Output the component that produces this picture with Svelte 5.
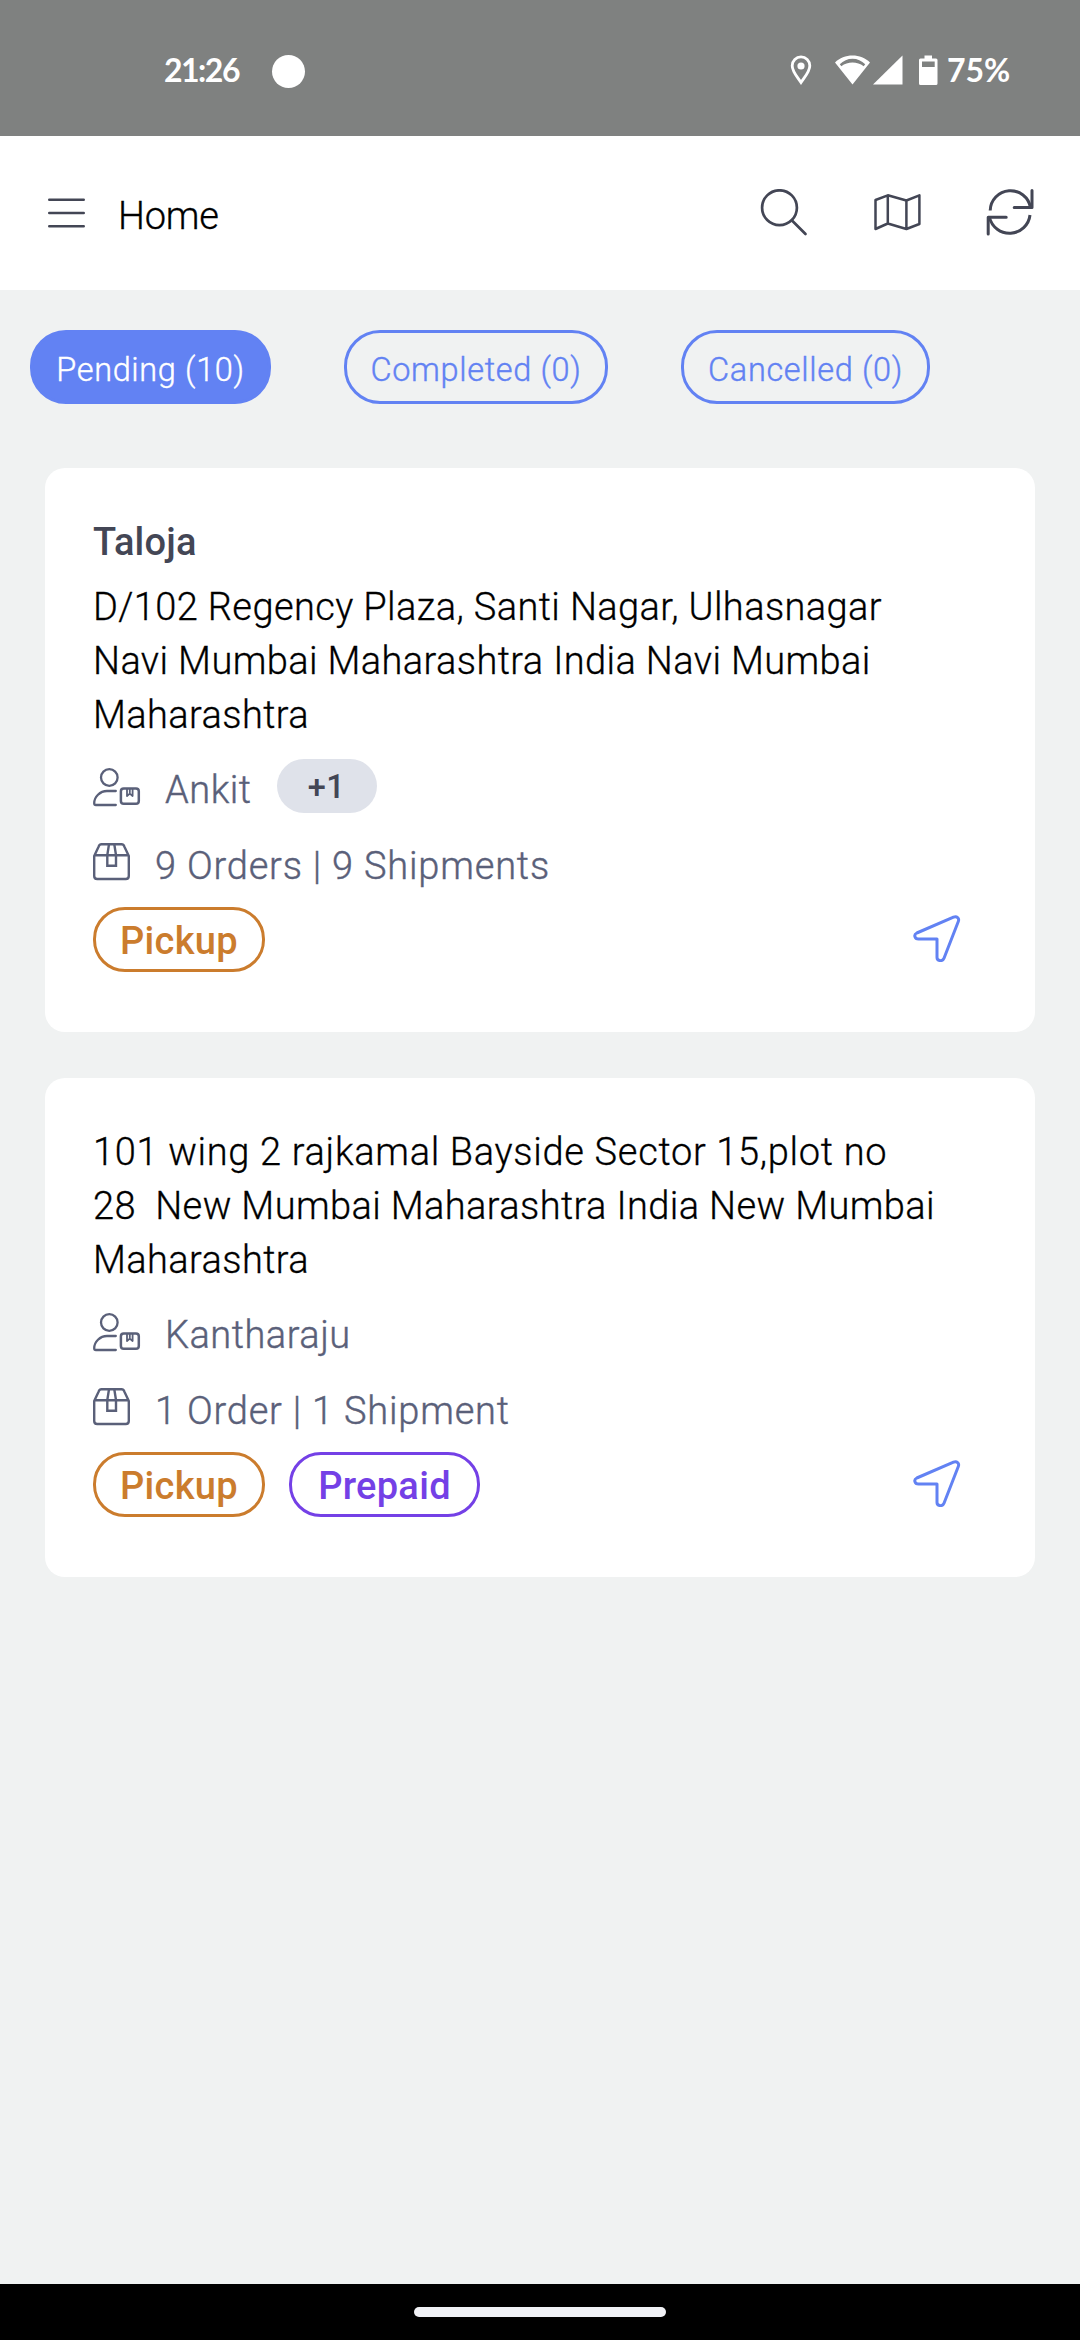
<script>
  const tabs = [
    { label: 'Pending (10)', kind: 'pending', active: true },
    { label: 'Completed (0)', kind: 'completed', active: false },
    { label: 'Cancelled (0)', kind: 'cancelled', active: false }
  ];

  const stops = [
    {
      title: 'Taloja',
      address: [
        'D/102 Regency Plaza, Santi Nagar, Ulhasnagar',
        'Navi Mumbai Maharashtra India Navi Mumbai',
        'Maharashtra'
      ],
      contact: 'Ankit',
      more: '+1',
      summary: '9 Orders | 9 Shipments',
      tags: ['Pickup']
    },
    {
      title: '',
      address: [
        '101 wing 2 rajkamal Bayside Sector 15,plot no',
        '28  New Mumbai Maharashtra India New Mumbai',
        'Maharashtra'
      ],
      contact: 'Kantharaju',
      more: '',
      summary: '1 Order | 1 Shipment',
      tags: ['Pickup', 'Prepaid']
    }
  ];
</script>

<div class="screen">
  <div class="status">
    <span class="time">21:26</span>
    <span class="dot"></span>
    <div class="status-icons">
      <svg class="pin" width="22" height="30" viewBox="0 0 22 30" fill="none" stroke="#fff" stroke-width="2.8">
        <path d="M11 27.5C7 21.5 2.2 16.5 2.2 10.7a8.8 8.8 0 0 1 17.6 0C19.8 16.5 15 21.5 11 27.5Z" />
        <circle cx="11" cy="11" r="3.6" fill="#fff" stroke="none" />
      </svg>
      <svg class="wifi" width="35" height="30" viewBox="0 0 35 30" fill="#fff">
        <path fill-rule="evenodd" d="M17.5 0.5C10.8 0.5 4.7 2.8 0 7.5L17.5 29.5 35 7.5C30.3 2.8 24.2 0.5 17.5 0.5ZM4.8 9.2C8.3 5.7 12.700 3.700 17.500 3.700s9.200 2 12.700 5.500l-1.500 2C25.300 8.700 21.600 7.500 17.500 7.500S9.700 8.700 6.300 11.200Z" />
      </svg>
      <svg class="signal" width="30" height="30" viewBox="0 0 30 30" fill="#fff"><path d="M29.500 0.500V29.500H0Z" /></svg>
      <svg class="battery" width="19" height="31" viewBox="0 0 19 31" fill="#fff">
        <path fill-rule="evenodd" d="M5.500 0.500h7.500v3h4q1.500 0 1.500 1.500v23.500q0 1.500-1.500 1.500h-15.500q-1.500 0-1.500-1.500v-23.500q0-1.500 1.500-1.500h4ZM3 6.500v5.500h12.700v-5.500Z" />
      </svg>
      <span class="percent">75%</span>
    </div>
  </div>

  <header class="bar">
    <svg class="menu" width="37" height="32" viewBox="0 0 37 32" stroke="#434655" stroke-width="2.600" stroke-linecap="round">
      <path d="M1.300 2.800H35.700M1.300 16H35.700M1.300 29.200H35.700" />
    </svg>
    <h1>Home</h1>
    <div class="actions">
      <svg width="48" height="48" viewBox="0 0 48 48" fill="none" stroke="#434655" stroke-width="2.700" stroke-linecap="round">
        <circle cx="19.500" cy="18.700" r="17.400" />
        <path d="M32 31.500L45.500 45" />
      </svg>
      <svg width="48" height="48" viewBox="0 0 48 48" fill="none" stroke="#434655" stroke-width="2.500" stroke-linejoin="round">
        <path d="M2.500 11L14.800 6.300 33.400 11.500 46.400 6.300V35L33.400 40 14.800 34.500 2.500 40ZM14.800 6.300V34.500M33.400 11.500V40" />
      </svg>
      <svg width="48" height="48" viewBox="0 0 48 48" fill="none" stroke="#434655" stroke-width="3" stroke-linecap="round" stroke-linejoin="round">
        <path stroke-linecap="butt" d="M4.200 21.500A20.300 20.300 0 0 1 44.500 18.500M3.500 28.500A20.600 20.600 0 0 0 44 26" />
        <path d="M46 1.500V18.500H28.200M20.200 28.200H2.200V45" />
      </svg>
    </div>
  </header>

  <nav class="tabs">
    {#each tabs as tab}
      <button class="tab {tab.kind}" class:active={tab.active}>{tab.label}</button>
    {/each}
  </nav>

  <main class="list">
    {#each stops as stop, i}
      <article class="card">
        {#if stop.title}<h2>{stop.title}</h2>{/if}
        <p class="address">
          {#each stop.address as line, n}<span class="line" class:loose={i === 1 && n === 0}>{line}</span>{/each}
        </p>
        <div class="row person">
          <svg width="48" height="39" viewBox="0 0 48 39" fill="none" stroke="#5a6079" stroke-width="2.300" stroke-linecap="round" stroke-linejoin="round">
            <circle cx="16.300" cy="9.500" r="8.300" />
            <path d="M22.800 23H14C7 23 1.200 29 1.200 35.300q0 1.700 1.700 1.700H22.800" />
            <rect x="27.900" y="20.500" width="17.900" height="15.200" rx="2.800" stroke-width="2.500" />
            <path d="M34 21V28L36.800 25.600 39.600 28V21M36.800 21V24.500" stroke-width="1.800" />
          </svg>
          <span class="contact">{stop.contact}</span>
          {#if stop.more}<span class="more">{stop.more}</span>{/if}
        </div>
        <div class="row parcel">
          <svg width="37" height="38" viewBox="0 0 37 38" fill="none" stroke="#5a6079" stroke-width="2.400" stroke-linejoin="round">
            <path d="M1.200 13V33q0 3 3 3H32.800q3 0 3-3V13L31.300 3.400Q30.600 1.200 28.500 1.200H8.500Q6.400 1.200 5.700 3.400ZM1.200 12.300H35.800" />
            <path d="M16 1.200L14.300 12V22.700H23V12L21.300 1.200" stroke-linejoin="miter" />
          </svg>
          <span class="summary">{stop.summary}</span>
        </div>
        <div class="foot">
          {#each stop.tags as tag}<span class="tag {tag.toLowerCase()}">{tag}</span>{/each}
          <svg class="plane" width="48" height="48" viewBox="0 0 48 48" fill="none" stroke="#6282f3" stroke-width="3" stroke-linejoin="round">
            <path d="M3.800 19L40.500 3.200C43.800 1.900 46.600 4.200 45.300 7.500L31 44.200C29.500 48 24 47 24 43.500V25H5.500C1.500 25 0.500 20.500 3.800 19Z" />
          </svg>
        </div>
      </article>
    {/each}
  </main>

  <div class="gesture"><span></span></div>
</div>

<style>
  :global(body) { margin: 0; }
  .screen {
    width: 1080px;
    height: 2340px;
    display: flex;
    flex-direction: column;
    background: #f0f2f2;
    font-family: Roboto, 'Liberation Sans', sans-serif;
    font-weight: 300;
    color: #000;
    overflow: hidden;
  }
  svg { display: block; flex: none; }

  .status {
    box-sizing: border-box;
    height: 136px;
    padding: 55px 71px 0 164px;
    display: flex;
    align-items: flex-start;
    background: #7f8180;
    color: #fff;
  }
  .time, .percent {
    font-family: Lato, 'Liberation Sans', sans-serif;
    font-weight: 700;
    font-size: 32px;
    line-height: 30px;
  }
  .time { width: 76px; white-space: nowrap; letter-spacing: -1.500px; }
  .dot { width: 33px; height: 33px; margin-left: 32px; border-radius: 50%; background: #fff; }
  .status-icons { margin-left: auto; display: flex; align-items: flex-start; }
  .wifi { margin-left: 23px; }
  .signal { margin-left: 3px; }
  .battery { margin-left: 16px; }
  .percent { width: 62px; margin-left: 9px; white-space: nowrap; }

  .bar {
    box-sizing: border-box;
    height: 154px;
    padding: 0 46px 0 48px;
    display: flex;
    align-items: center;
    background: #fff;
  }
  h1 { margin: 6px 0 0 33px; font-size: 38px; font-weight: 300; line-height: 54px; letter-spacing: -0.200px; -webkit-text-stroke: 0.300px; }
  .actions { margin-left: auto; display: flex; gap: 65px; }

  .tabs { display: flex; gap: 73px; padding: 40px 0 0 30px; }
  .tab {
    box-sizing: border-box;
    height: 74px;
    padding: 5px 0 0;
    border: 3px solid #6282f3;
    border-radius: 36px;
    background: none;
    color: #6282f3;
    font: inherit;
    font-size: 32.500px;
    text-align: center;
    letter-spacing: 0.650px;
    white-space: nowrap;
    -webkit-text-stroke: 0.400px;
  }
  .pending { width: 241px; }
  .completed { width: 264px; }
  .cancelled { width: 249px; }
  .active { background: #6282f3; color: #fff; }

  .list { display: flex; flex-direction: column; gap: 46px; padding: 64px 45px 0; }
  .card { padding: 47px 48px 60px; border-radius: 20px; background: #fff; font-size: 38px; line-height: 54px; }
  h2 { margin: 0 0 11px; font-size: 38px; font-weight: 500; line-height: 54px; color: #434655; letter-spacing: 0.200px; }
  .address { margin: 0; -webkit-text-stroke: 0.300px; }
  .line { display: block; white-space: pre; letter-spacing: 0.390px; }
  .line.loose { letter-spacing: 0.680px; }
  .row { display: flex; align-items: flex-start; height: 54px; margin-top: 21px; color: #5a6079; white-space: nowrap; letter-spacing: 0.500px; }
  .row svg { margin-top: 5px; }
  .contact, .summary { -webkit-text-stroke: 0.400px; }
  .contact { margin-left: 24px; }
  .summary { margin: 1px 0 0 25px; letter-spacing: 0.800px; }
  .more {
    width: 100px;
    height: 54px;
    margin: -4px 0 0 25px;
    border-radius: 27px;
    background: #dfe2ea;
    color: #434655;
    font-size: 32.500px;
    font-weight: 500;
    line-height: 56px;
    text-align: center;
  }
  .foot { display: flex; align-items: flex-start; gap: 24px; margin-top: 15px; }
  .tag {
    box-sizing: border-box;
    height: 65px;
    border: 3px solid;
    border-radius: 32px;
    font-weight: 500;
    line-height: 63px;
    text-align: center;
    letter-spacing: 0.300px;
  }
  .pickup { width: 172px; color: #cb7c2d; }
  .prepaid { width: 191px; color: #7440e6; }
  .plane { margin: 7px 26px 0 auto; }

  .gesture { margin-top: auto; height: 56px; background: #000; display: flex; align-items: center; justify-content: center; }
  .gesture span { width: 252px; height: 10px; border-radius: 5px; background: #f1f2f6; }
</style>
